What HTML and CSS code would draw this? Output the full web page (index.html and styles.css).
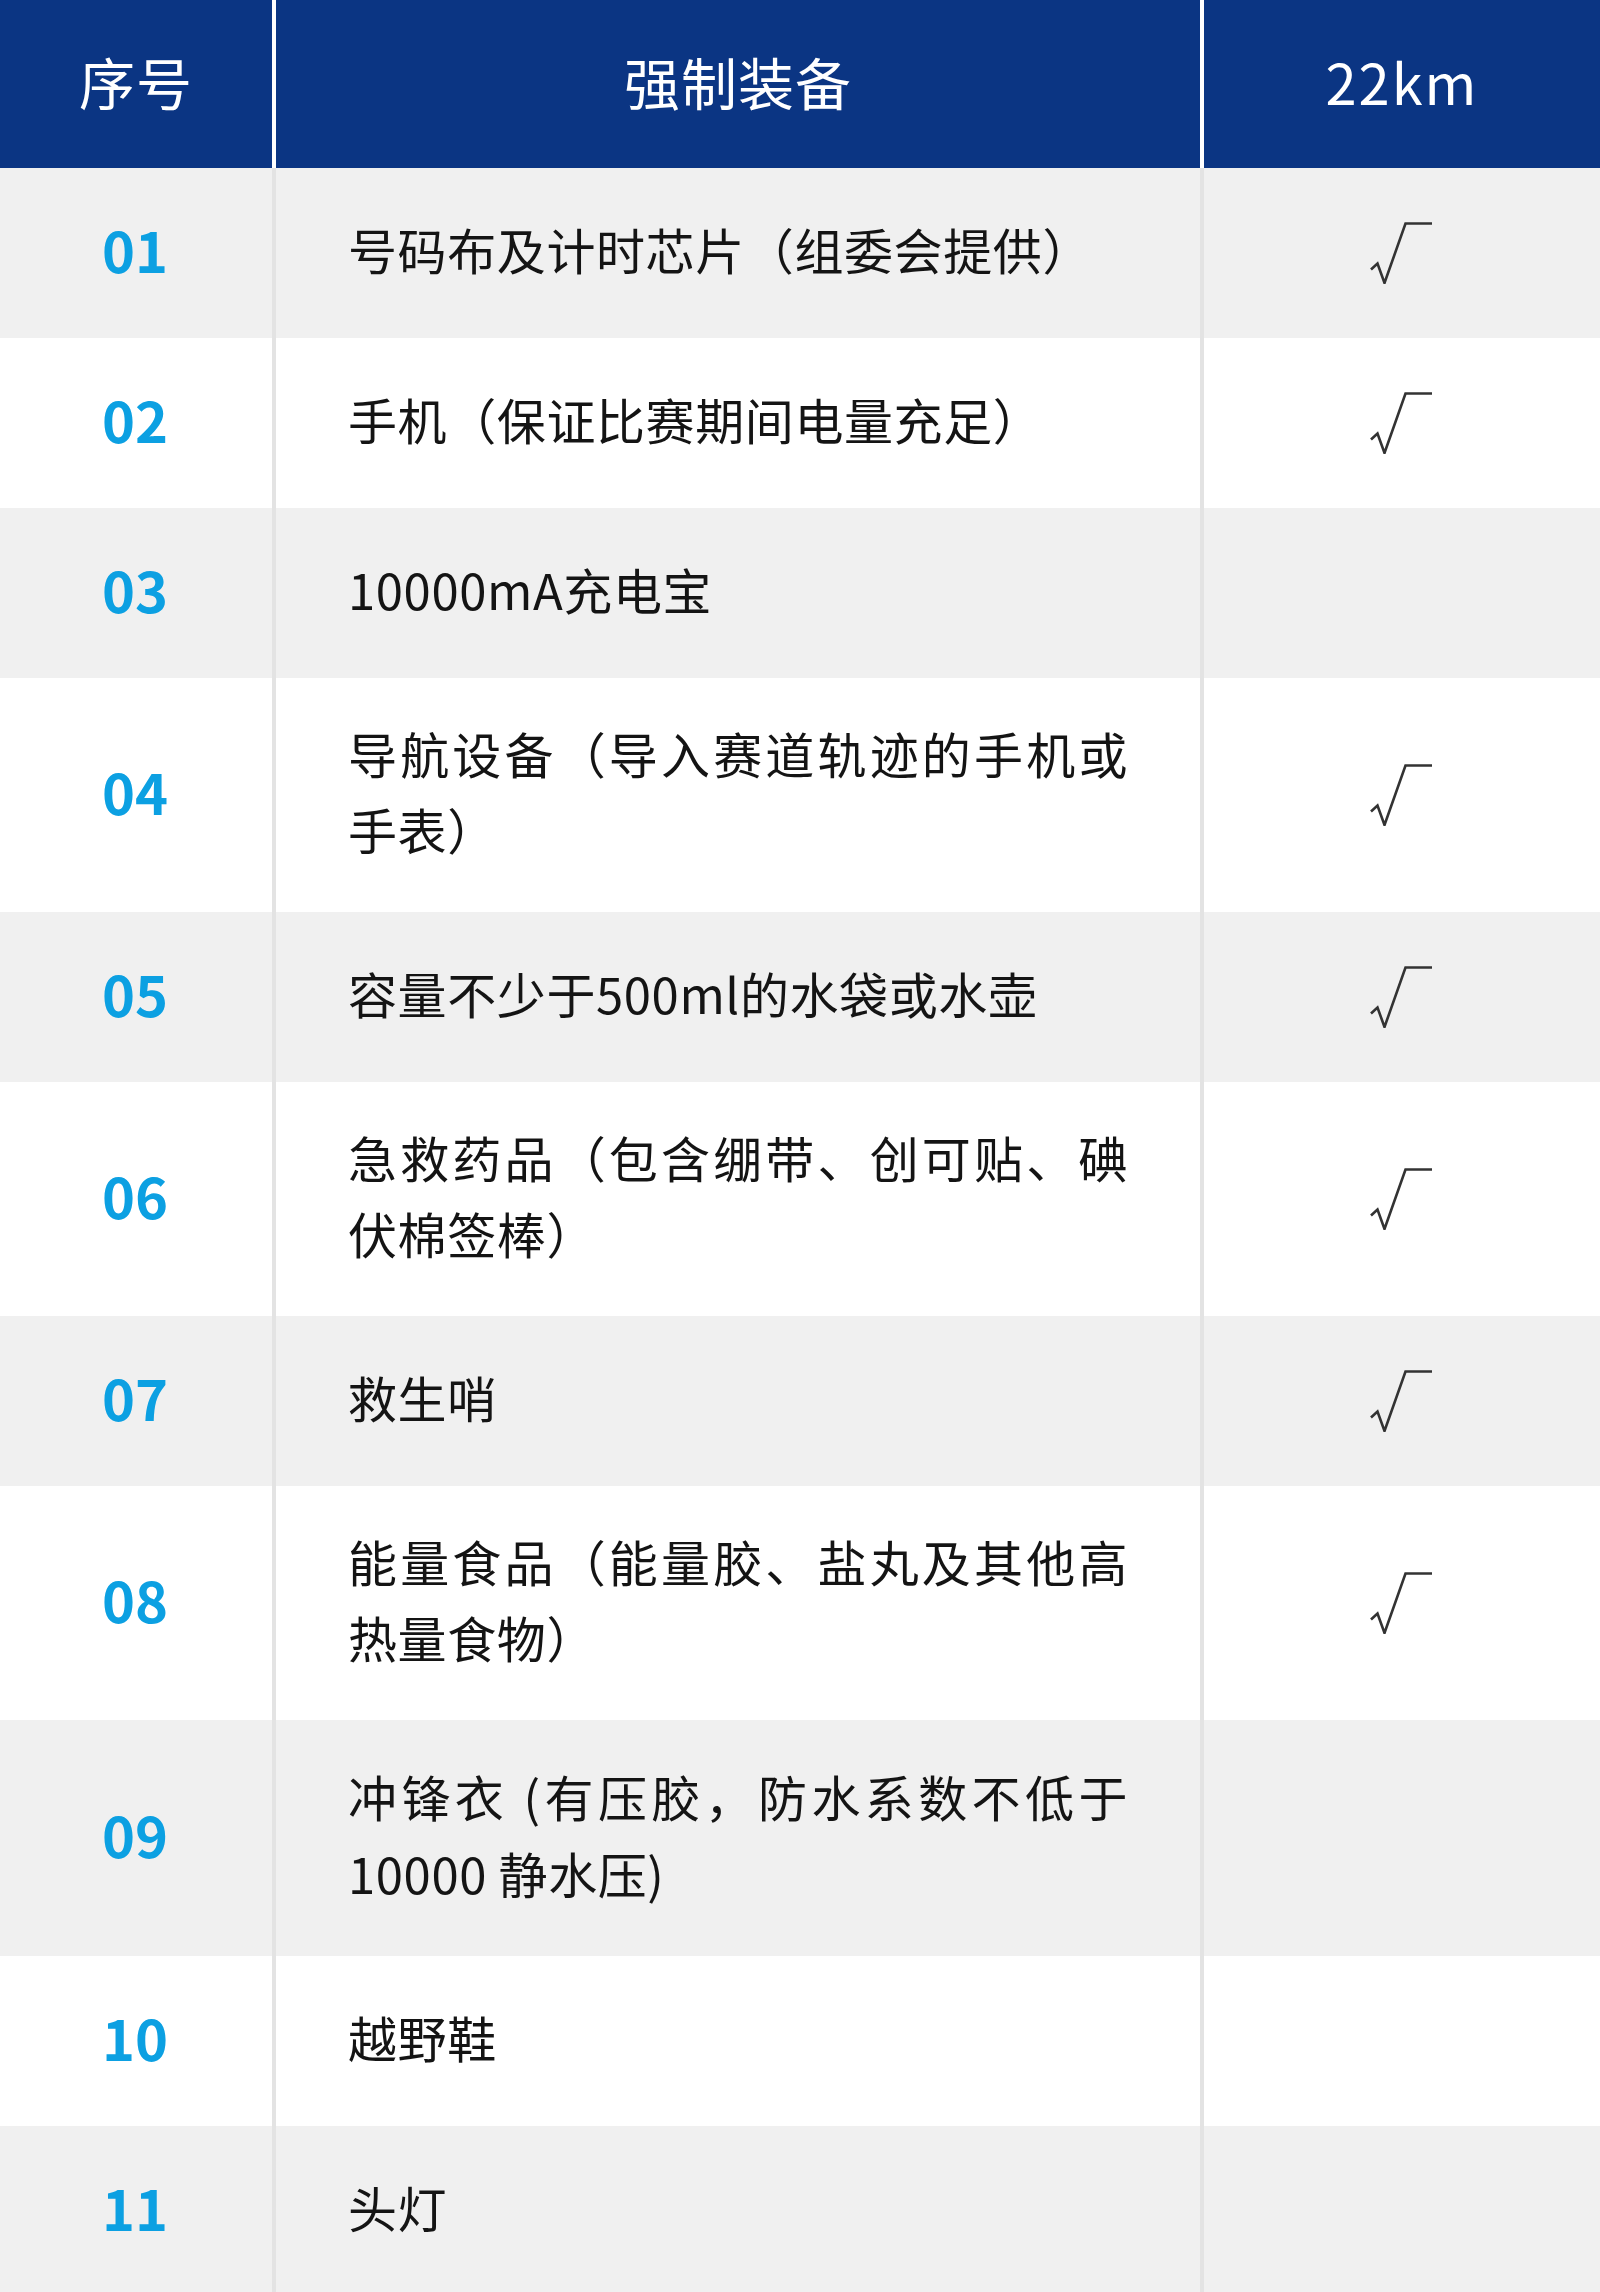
FILE: index.html
```html
<!DOCTYPE html>
<html lang="zh-CN">
<head>
<meta charset="utf-8">
<title>强制装备</title>
<link rel="stylesheet" href="styles.css">
</head>
<body>
<div class="table">
  <div class="row head">
    <div class="cell c1">序号</div>
    <div class="cell c2">强制装备</div>
    <div class="cell c3 km">22km</div>
  </div>

  <div class="row odd">
    <div class="cell c1 num">01</div>
    <div class="cell c2 desc"><div class="txt">号码布及计时芯片（组委会提供）</div></div>
    <div class="cell c3"><svg class="check" viewBox="0 0 62 62"><path d="M1 47.5 L7.5 41.5 L14.5 61 L35.5 1.5 H62"/></svg></div>
  </div>

  <div class="row even">
    <div class="cell c1 num">02</div>
    <div class="cell c2 desc"><div class="txt">手机（保证比赛期间电量充足）</div></div>
    <div class="cell c3"><svg class="check" viewBox="0 0 62 62"><path d="M1 47.5 L7.5 41.5 L14.5 61 L35.5 1.5 H62"/></svg></div>
  </div>

  <div class="row odd">
    <div class="cell c1 num">03</div>
    <div class="cell c2 desc"><div class="txt">10000mA充电宝</div></div>
    <div class="cell c3"></div>
  </div>

  <div class="row even">
    <div class="cell c1 num">04</div>
    <div class="cell c2 desc"><div class="txt">导航设备（导入赛道轨迹的手机或手表）</div></div>
    <div class="cell c3"><svg class="check" viewBox="0 0 62 62"><path d="M1 47.5 L7.5 41.5 L14.5 61 L35.5 1.5 H62"/></svg></div>
  </div>

  <div class="row odd">
    <div class="cell c1 num">05</div>
    <div class="cell c2 desc"><div class="txt">容量不少于500ml的水袋或水壶</div></div>
    <div class="cell c3"><svg class="check" viewBox="0 0 62 62"><path d="M1 47.5 L7.5 41.5 L14.5 61 L35.5 1.5 H62"/></svg></div>
  </div>

  <div class="row even">
    <div class="cell c1 num">06</div>
    <div class="cell c2 desc"><div class="txt">急救药品（包含绷带、创可贴、碘伏棉签棒）</div></div>
    <div class="cell c3"><svg class="check" viewBox="0 0 62 62"><path d="M1 47.5 L7.5 41.5 L14.5 61 L35.5 1.5 H62"/></svg></div>
  </div>

  <div class="row odd">
    <div class="cell c1 num">07</div>
    <div class="cell c2 desc"><div class="txt">救生哨</div></div>
    <div class="cell c3"><svg class="check" viewBox="0 0 62 62"><path d="M1 47.5 L7.5 41.5 L14.5 61 L35.5 1.5 H62"/></svg></div>
  </div>

  <div class="row even">
    <div class="cell c1 num">08</div>
    <div class="cell c2 desc"><div class="txt">能量食品（能量胶、盐丸及其他高热量食物）</div></div>
    <div class="cell c3"><svg class="check" viewBox="0 0 62 62"><path d="M1 47.5 L7.5 41.5 L14.5 61 L35.5 1.5 H62"/></svg></div>
  </div>

  <div class="row odd">
    <div class="cell c1 num">09</div>
    <div class="cell c2 desc"><div class="txt loose">冲锋衣 (有压胶，防水系数不低于10000 静水压)</div></div>
    <div class="cell c3"></div>
  </div>

  <div class="row even">
    <div class="cell c1 num">10</div>
    <div class="cell c2 desc"><div class="txt">越野鞋</div></div>
    <div class="cell c3"></div>
  </div>

  <div class="row odd">
    <div class="cell c1 num">11</div>
    <div class="cell c2 desc"><div class="txt">头灯</div></div>
    <div class="cell c3"></div>
  </div>
</div>
</body>
</html>
```

FILE: styles.css
```css
html, body {
  margin: 0;
  padding: 0;
  background: #ffffff;
}

body {
  font-family: "Noto Sans CJK SC", "Noto Sans", sans-serif;
  color: #141414;
}

.table {
  width: 1600px;
}

.row {
  display: grid;
  grid-template-columns: 276px 928px 396px;
  min-height: 170px;
}

.row.odd {
  background: #f0f0f0;
}

.row.even {
  background: #ffffff;
}

.cell {
  display: flex;
  align-items: center;
  justify-content: center;
  box-sizing: border-box;
}

.c1,
.c2 {
  border-right: 4px solid #e3e3e3;
}

.row.head {
  min-height: 168px;
  height: 168px;
  background: #0b3583;
}

.row.head .cell {
  color: #ffffff;
  font-size: 56px;
  font-weight: 400;
  letter-spacing: 1px;
  padding-bottom: 8px;
  border-right-color: #ffffff;
}

.row.head .c3 {
  border-right: none;
}

.row.head .km {
  letter-spacing: 2px;
}

.num {
  color: #0ca0e2;
  font-size: 56px;
  font-weight: 700;
  padding-right: 2px;
  padding-bottom: 10px;
}

.desc {
  justify-content: flex-start;
  padding: 37px 72px 45px;
}

.txt {
  width: 100%;
  font-size: 49px;
  letter-spacing: 0.6px;
  line-height: 76px;
  text-align: justify;
}

.txt.loose {
  line-height: 77px;
}

.check {
  width: 62px;
  height: 62px;
  margin-left: -2px;
  fill: none;
  stroke: #333333;
  stroke-width: 2.6;
  stroke-linejoin: miter;
  stroke-linecap: butt;
}
```
